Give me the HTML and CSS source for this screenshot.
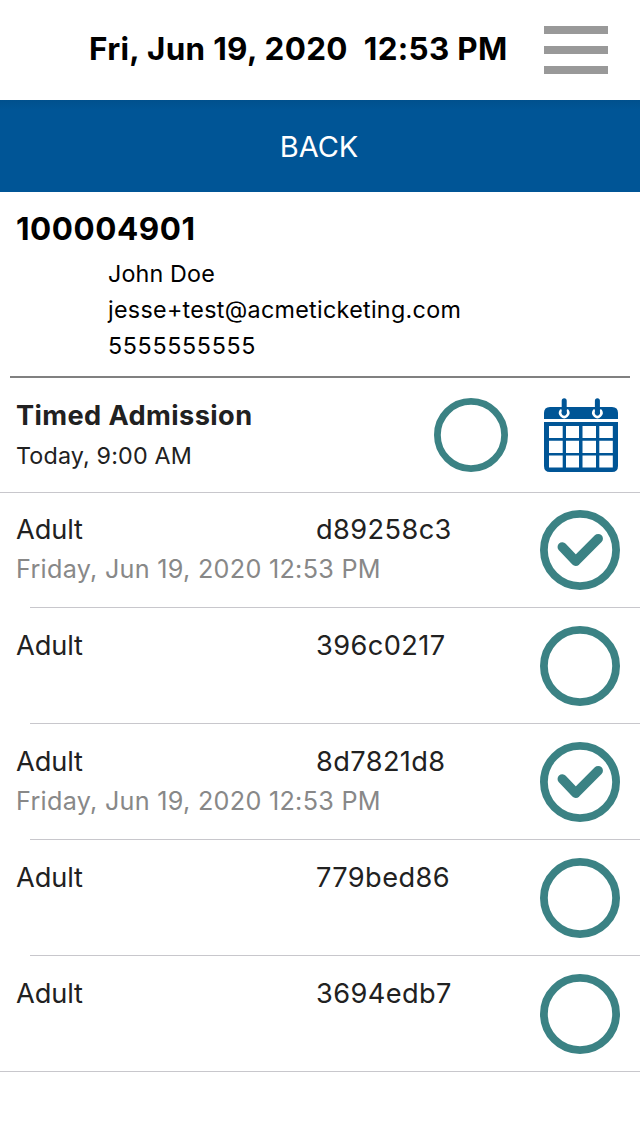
FILE: index.html
```html
<!DOCTYPE html>
<html lang="en">
<head>
    <meta charset="UTF-8">
    <meta name="viewport" content="width=device-width, initial-scale=1.0">
    <title>Order 100004901</title>
    <link rel="stylesheet" href="styles.css">
</head>
<body>
    <svg class="sprite" aria-hidden="true">
        <symbol id="circle" viewBox="0 0 80 80">
            <circle cx="40" cy="40" r="36.1" fill="none" stroke="currentColor" stroke-width="7.8"/>
        </symbol>
        <symbol id="circle-thin" viewBox="0 0 74 74">
            <circle cx="37" cy="37" r="33.6" fill="none" stroke="currentColor" stroke-width="6.8"/>
        </symbol>
        <symbol id="circle-check" viewBox="0 0 80 80">
            <circle cx="40" cy="40" r="36.1" fill="none" stroke="currentColor" stroke-width="7.8"/>
            <path d="M22.3 37 L35.8 51.2 L58.2 28.7" fill="none" stroke="currentColor" stroke-width="9.5" stroke-linecap="round" stroke-linejoin="round"/>
        </symbol>
    </svg>

    <header class="topbar">
        <h1 class="clock"><span>Fri, Jun 19, 2020</span><span>12:53 PM</span></h1>
        <button class="menu" aria-label="Menu"><span></span><span></span><span></span></button>
    </header>

    <button class="back">BACK</button>

    <section class="order">
        <h2 class="order-number">100004901</h2>
        <div class="customer">
            <p class="name">John Doe</p>
            <p class="email">jesse+test@acmeticketing.com</p>
            <p class="phone">5555555555</p>
        </div>
    </section>

    <section class="event">
        <div class="event-info">
            <h3 class="event-title">Timed Admission</h3>
            <p class="event-time">Today, 9:00 AM</p>
        </div>
        <svg class="event-circle"><use href="#circle-thin"/></svg>
        <svg class="calendar" viewBox="0 0 74 74">
            <path class="cal-fill" d="M0 21 V15 Q0 9 6 9 H68 Q74 9 74 15 V21 Z"/>
            <path class="cal-fill" fill-rule="evenodd" d="M0 24 H74 V68 Q74 74 68 74 H6 Q0 74 0 68 Z
                M5 28 V40 H18.7 V28 Z M22 28 V40 H35 V28 Z M38.5 28 V40 H52 V28 Z M55.3 28 V40 H68.8 V28 Z
                M5 42.7 V55 H18.7 V42.7 Z M22 42.7 V55 H35 V42.7 Z M38.5 42.7 V55 H52 V42.7 Z M55.3 42.7 V55 H68.8 V42.7 Z
                M5 57.4 V69.4 H18.7 V57.4 Z M22 57.4 V69.4 H35 V57.4 Z M38.5 57.4 V69.4 H52 V57.4 Z M55.3 57.4 V69.4 H68.8 V57.4 Z"/>
            <path class="cal-ring" d="M16.9 12.6 A4 4 0 1 0 23.5 12.6 M50.1 12.6 A4 4 0 1 0 56.7 12.6"/>
            <path class="cal-pin" d="M20.2 2.8 V14 M53.4 2.8 V14"/>
        </svg>
    </section>

    <ul class="tickets">
        <li class="ticket">
            <span class="type">Adult</span>
            <span class="code">d89258c3</span>
            <span class="scanned">Friday, Jun 19, 2020 12:53 PM</span>
            <svg class="status"><use href="#circle-check"/></svg>
        </li>
        <li class="ticket">
            <span class="type">Adult</span>
            <span class="code">396c0217</span>
            <svg class="status"><use href="#circle"/></svg>
        </li>
        <li class="ticket">
            <span class="type">Adult</span>
            <span class="code">8d7821d8</span>
            <span class="scanned">Friday, Jun 19, 2020 12:53 PM</span>
            <svg class="status"><use href="#circle-check"/></svg>
        </li>
        <li class="ticket">
            <span class="type">Adult</span>
            <span class="code">779bed86</span>
            <svg class="status"><use href="#circle"/></svg>
        </li>
        <li class="ticket">
            <span class="type">Adult</span>
            <span class="code">3694edb7</span>
            <svg class="status"><use href="#circle"/></svg>
        </li>
    </ul>
</body>
</html>
```
FILE: styles.css
```css
* {
    box-sizing: border-box;
}
body {
    margin: 0;
    background-color: #fff;
    color: #212121;
    font-family: Inter, "Liberation Sans", sans-serif;
}
h1, h2, h3, p, ul {
    margin: 0;
    padding: 0;
}
button {
    border: none;
    border-radius: 0;
    padding: 0;
    font-family: inherit;
}
.sprite {
    display: none;
}
.topbar {
    display: flex;
    justify-content: space-between;
    height: 100px;
    padding: 26px 32px 26px 89px;
}
.clock {
    display: flex;
    gap: 16px;
    color: #000;
    font-size: 31.4px;
    font-weight: 700;
    letter-spacing: 0.34px;
    line-height: 46px;
    white-space: nowrap;
}
.menu {
    display: flex;
    flex-direction: column;
    justify-content: space-between;
    width: 64px;
    height: 48px;
    background: none;
}
.menu span {
    width: 64px;
    height: 8px;
    background-color: #999;
}
.back {
    display: block;
    width: 100%;
    height: 92px;
    padding: 1px 2px 0 0;
    background: linear-gradient(#00508d, #005596 10px);
    color: #fff;
    font-size: 29px;
    letter-spacing: -0.1px;
}
.order {
    height: 186px;
    margin: 0 10px;
    padding: 16px 6px 0;
    border-bottom: 2px solid #808080;
    color: #000;
}
.order-number {
    font-size: 31.4px;
    font-weight: 700;
    letter-spacing: 0.55px;
    line-height: 42px;
}
.customer {
    padding: 6px 0 0 92px;
    font-size: 23.3px;
    letter-spacing: 0.3px;
    line-height: 36px;
}
.name {
    letter-spacing: 0.15px;
}
.phone {
    letter-spacing: 0.65px;
}
.event {
    display: flex;
    height: 115px;
    padding: 20px 22px 0 16px;
    border-bottom: 1px solid #c8c7cc;
}
.event-info {
    flex: 1;
}
.event-title {
    font-size: 27.2px;
    font-weight: 700;
    letter-spacing: 0.4px;
    line-height: 36px;
}
.event-time {
    padding-top: 4px;
    font-size: 23.3px;
    letter-spacing: 0.15px;
    line-height: 36px;
}
.event-circle {
    width: 74px;
    height: 74px;
    margin-right: 36px;
    color: #3b8284;
}
.calendar {
    width: 74px;
    height: 74px;
}
.cal-fill {
    fill: #005596;
}
.cal-ring {
    fill: none;
    stroke: #fff;
    stroke-width: 2.6;
    stroke-linecap: round;
}
.cal-pin {
    fill: none;
    stroke: #005596;
    stroke-width: 5;
    stroke-linecap: round;
}
.tickets {
    margin-top: -1px;
    list-style: none;
}
.ticket {
    display: grid;
    grid-template-columns: 300px 224px 80px;
    grid-template-rows: 40px 40px;
    height: 116px;
    padding: 18px 20px 0 16px;
    background: linear-gradient(#c8c7cc, #c8c7cc) 30px 100% / 100% 1px no-repeat;
}
.ticket:last-child {
    background-position: 0 100%;
}
.type, .code {
    font-size: 27.2px;
    line-height: 39px;
}
.type {
    letter-spacing: -0.1px;
}
.code {
    letter-spacing: 0.4px;
}
.scanned {
    grid-column: 1 / 3;
    grid-row: 2;
    color: #888;
    font-size: 25.2px;
    letter-spacing: 0.28px;
    line-height: 39px;
}
.status {
    grid-column: 3;
    grid-row: 1 / 3;
    width: 80px;
    height: 80px;
    color: #3b8284;
}
```
